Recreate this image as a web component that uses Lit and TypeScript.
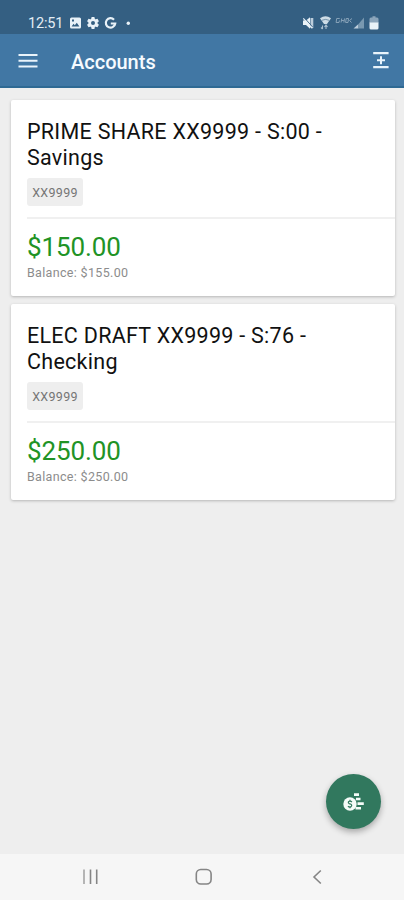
import { LitElement, html, css } from "lit";
import { customElement, property } from "lit/decorators.js";

@customElement("status-bar")
class StatusBar extends LitElement {
  static styles = css`
    :host { display: flex; height: 34px; box-sizing: border-box; padding: 12px 24px 0 28px; background: #345f82; color: #e3edf4; justify-content: space-between; align-items: flex-start; }
    .time { font: 400 14.5px/22px Roboto, sans-serif; width: 36px; letter-spacing: -.2px; padding-top: 1px; }
    .left { display: flex; align-items: center; height: 22px; }
    svg { display: block; }
  `;
  render() {
    return html`
      <div class="left">
        <span class="time">12:51</span>
        <svg width="72" height="22" viewBox="64 12 72 22" fill="#e9f2f8">
          <path fill-rule="evenodd" d="M71.5 17.5h8a1.500 1.500 0 0 1 1.500 1.500v8a1.500 1.500 0 0 1-1.500 1.500h-8a1.500 1.500 0 0 1-1.500-1.500v-8a1.500 1.500 0 0 1 1.500-1.500zM71.600 26.400h7.800l-2.600-3.600-2 2.400-1.300-1.400zM72 19.500v2h2v-2z"/>
          <g transform="translate(93 23)">
            <circle r="3.200" fill="none" stroke="#e9f2f8" stroke-width="2.400"/>
            <path d="M-1.400-6h2.800l.5 2.500h-3.800zM-1.400 6h2.800l.5-2.500h-3.800z"/>
            <path transform="rotate(60)" d="M-1.400-6h2.800l.5 2.500h-3.800zM-1.400 6h2.800l.5-2.500h-3.800z"/>
            <path transform="rotate(120)" d="M-1.400-6h2.800l.5 2.500h-3.800zM-1.400 6h2.800l.5-2.500h-3.800z"/>
          </g>
          <path d="M114 19.700a4.700 4.700 0 1 0 1.200 3.800h-4.400" fill="none" stroke="#e9f2f8" stroke-width="2.200"/>
          <circle cx="128.300" cy="23.200" r="1.700"/>
        </svg>
      </div>
      <svg width="80" height="22" viewBox="300 12 80 22" fill="#e9f2f8">
        <path d="M303 20.500h3l4-3.200v11.400l-4-3.600h-3z"/>
        <path d="M310.500 18h2.800v10h-2.800z" opacity=".75"/>
        <path d="M304.200 17.600l8.500 9.500" stroke="#345f82" stroke-width=".9"/>
        <path d="M303.300 18.300l9 10" stroke="#e9f2f8" stroke-width="1.200"/>
        <path d="M320 18.300q5.500-4 11 0l-4 5.700h-3z" opacity=".85"/>
        <path d="M322 20.300q3.500-1.800 7 0" fill="none" stroke="#345f82" stroke-width=".6"/>
        <path d="M322.500 29v-3.500m-1.500 2l1.500 1.500m3.500 0v-3.500m-1.500 1.500l1.500-2 1.500 2" fill="none" stroke="#a9bfd0" stroke-width="1.100"/>
        <g fill="none" stroke="#87a2b8" stroke-width="1">
          <path d="M339.700 18.500h-3l-.6 4h2.900l.4-2M341.700 18.500l-.6 4M341.400 20.500h2.500M344.500 18.500l-.6 4M346.200 18.500h2.300l-.5 4h-2.400zM352 18.500l-2.500 2 2 2"/>
        </g>
        <path d="M353.500 28.500l5-4.500v4.500z" fill="#bccddb"/>
        <path d="M358.500 24l5.500-6.500v11h-5.500z" fill="#7898b0"/>
        <path d="M371 17.500h1.500v-1.200h3v1.200h1.500q1.500 0 1.500 1.500v4h-9v-4q0-1.500 1.500-1.500z" fill="#8ba5bb"/>
        <path d="M369.500 22.500h9v5.500q0 1.500-1.500 1.500h-6q-1.500 0-1.500-1.500z"/>
      </svg>
    `;
  }
}

@customElement("account-card")
class AccountCard extends LitElement {
  @property() name = "";
  @property() number = "";
  @property() available = "";
  @property() balance = "";
  static styles = css`
    :host { display: block; height: 196px; box-sizing: border-box; padding: 19px 0 0 16px; background: #fff; border-radius: 2px; box-shadow: 0 1px 3px rgba(0,0,0,.24); font-family: Roboto, sans-serif; }
    .name { font-size: 21.5px; line-height: 25.5px; letter-spacing: .28px; color: #111; width: 320px; height: 51px; }
    .chip { display: flex; align-items: center; justify-content: center; width: 56px; height: 28px; margin-top: 8px; border-radius: 3px; background: #eee; color: #757575; font-size: 12.5px; letter-spacing: .3px; }
    .amounts { margin-top: 11px; border-top: 2px solid #f0f0f0; padding-top: 13px; }
    .available { color: #219325; font-size: 26px; line-height: 30px; letter-spacing: -.1px; }
    .balance { color: #8c8c8c; font-size: 12.5px; line-height: 16px; margin-top: 3px; letter-spacing: .33px; }
  `;
  render() {
    return html`
      <div class="name">${this.name}</div>
      <div class="chip">${this.number}</div>
      <div class="amounts">
        <div class="available">${this.available}</div>
        <div class="balance">Balance: ${this.balance}</div>
      </div>
    `;
  }
}

@customElement("app-root")
class AppRoot extends LitElement {
  static styles = css`
    :host { display: flex; flex-direction: column; height: 900px; position: relative; background: #eee; overflow: hidden; font-family: Roboto, sans-serif; }
    svg { display: block; }
    .bar { display: flex; align-items: center; height: 54px; box-sizing: border-box; padding: 0 15px 0 18px; background: #4177a4; border-bottom: 2px solid #2e6993; }
    .title { flex: 1; margin-left: 33px; padding-top: 3px; color: #f6fbff; font-size: 20px; font-weight: 500; line-height: 24px; }
    .list { flex: 1; display: flex; flex-direction: column; gap: 8px; padding: 12px 9px 0 11px; }
    .fab { position: absolute; left: 326px; top: 774px; width: 55px; height: 55px; border-radius: 50%; background: #31785e; box-shadow: 0 3px 6px rgba(0,0,0,.3); }
    .nav { height: 46px; background: #f6f6f6; }
  `;
  render() {
    return html`
      <status-bar></status-bar>
      <header class="bar">
        <svg width="20" height="18" viewBox="0 0 20 18" fill="#e9f4fb"><path d="M.5 3h19v2h-19zM.5 8.700h19v2h-19zM.5 14.400h19v2h-19z"/></svg>
        <div class="title">Accounts</div>
        <svg width="16" height="18" viewBox="373 51.500 16 18" fill="#e9f4fb"><path d="M373.200 52.500h15.400v2.200h-15.400zM373.200 66.500h15.400v2.200h-15.400zM380 56.700h2v3h3v2h-3v3h-2v-3h-3v-2h3z"/></svg>
      </header>
      <main class="list">
        <account-card name="PRIME SHARE XX9999 - S:00 - Savings" number="XX9999" available="$150.00" balance="$155.00"></account-card>
        <account-card name="ELEC DRAFT XX9999 - S:76 - Checking" number="XX9999" available="$250.00" balance="$250.00"></account-card>
      </main>
      <div class="fab">
        <svg width="55" height="55" viewBox="326 774 55 55" fill="#f5fbf8">
          <path d="M354 793.300h5v2.600h-5zM356 797.700h4.500v2.600h-4.500zM357.500 802.300h6.300v2.600h-6.300zM355.500 807h5.500v2.600h-5.500z"/>
          <circle cx="350" cy="804" r="6.700"/>
          <path d="M352 802q-1.600-1.300-3.200-.5-1.100 1.200.4 2.100l1.700.7q1.500 1 .2 2.300-1.600.8-3.200-.4M350 799.800v1.500m0 5.600v1.400" fill="none" stroke="#31785e" stroke-width="1.200"/>
        </svg>
      </div>
      <nav class="nav">
        <svg width="404" height="46" viewBox="0 854 404 46" fill="none" stroke="#858585" stroke-width="1.600">
          <path d="M84 869.500v14.500" stroke="#a5a5a5"/><path d="M90.500 869.500v14.500M96.700 869.500v14.500"/>
          <rect x="196.300" y="869.500" width="14.800" height="14.500" rx="4.500"/>
          <path d="M320.800 870.500l-6.800 6.500 6.800 6.500"/>
        </svg>
      </nav>
    `;
  }
}
